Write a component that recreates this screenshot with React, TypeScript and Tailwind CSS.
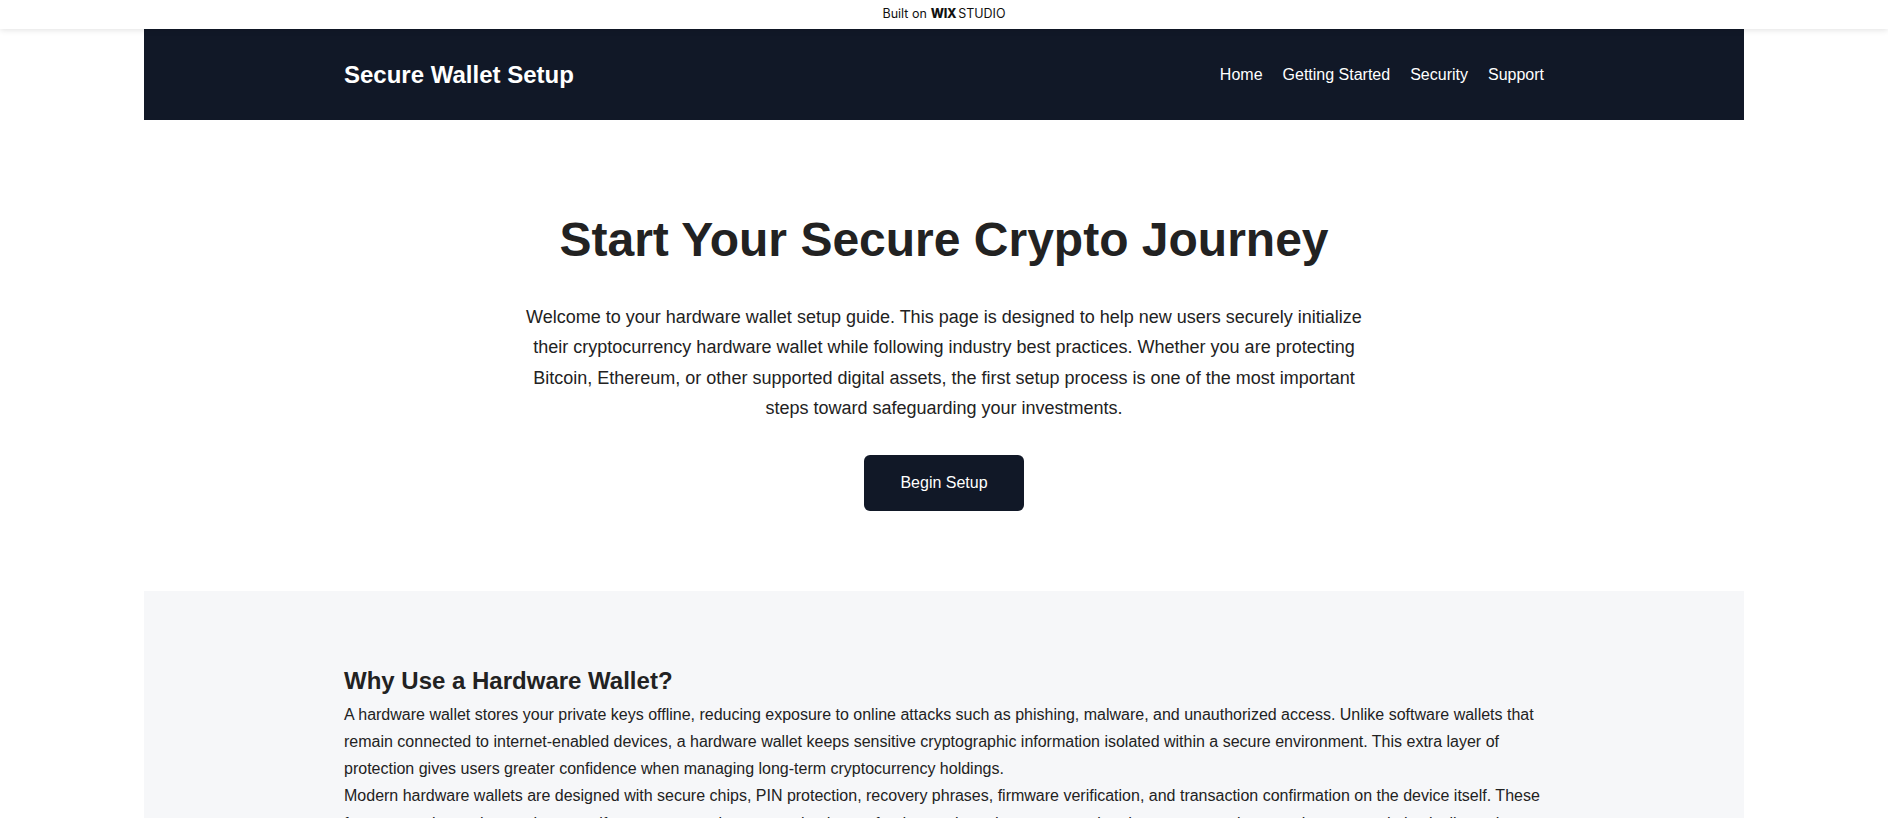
const navLinks = ["Home", "Getting Started", "Security", "Support"];

function BuiltOnBar() {
  return (
    <div className="relative z-10 flex h-[29px] items-center justify-center bg-white shadow-[0_1px_6px_rgba(0,0,0,0.12)]">
      <span className="flex items-center gap-[4px] text-[12.5px] text-[#111] font-['Inter',sans-serif]">
        Built on
        <span className="flex items-center">
          <span className="font-extrabold tracking-[-0.3px]">WIX</span>
          <span className="ml-[2px] font-normal">STUDIO</span>
        </span>
      </span>
    </div>
  );
}

export default function App() {
  return (
    <div className="min-h-screen bg-white font-['Liberation_Sans',Arial,sans-serif] text-[#222]">
      <BuiltOnBar />

      <div className="mx-auto w-[1600px]">
        <header className="bg-[#111827]">
          <div className="mx-auto flex h-[91px] w-[1200px] items-center justify-between">
            <h1 className="text-2xl font-bold text-white">Secure Wallet Setup</h1>
            <nav className="flex items-center gap-5">
              {navLinks.map((link) => (
                <a key={link} href="#" className="text-base text-white">
                  {link}
                </a>
              ))}
            </nav>
          </div>
        </header>

        <section className="flex flex-col items-center px-6 pt-[91px] pb-20 text-center">
          <h2 className="text-5xl font-bold leading-[1.2] text-[#222]">
            Start Your Secure Crypto Journey
          </h2>
          <p className="mt-[33px] max-w-[850px] text-lg leading-[1.7] text-[#222]">
            Welcome to your hardware wallet setup guide. This page is designed to help new users
            securely initialize their cryptocurrency hardware wallet while following industry best
            practices. Whether you are protecting Bitcoin, Ethereum, or other supported digital
            assets, the first setup process is one of the most important steps toward safeguarding
            your investments.
          </p>
          <button className="mt-[31px] rounded-md bg-[#111827] px-9 py-4 text-base leading-6 text-white">
            Begin Setup
          </button>
        </section>

        <section className="bg-[#f6f7f9] pt-[76px] pb-20">
          <div className="mx-auto w-[1200px]">
            <h3 className="mb-[5px] text-2xl font-bold leading-[1.2] text-[#222]">
              Why Use a Hardware Wallet?
            </h3>
            <p className="text-base leading-[1.7] text-[#222]">
              A hardware wallet stores your private keys offline, reducing exposure to online attacks
              such as phishing, malware, and unauthorized access. Unlike software wallets that remain
              connected to internet-enabled devices, a hardware wallet keeps sensitive cryptographic
              information isolated within a secure environment. This extra layer of protection gives
              users greater confidence when managing long-term cryptocurrency holdings.
            </p>
            <p className="text-base leading-[1.7] text-[#222]">
              Modern hardware wallets are designed with secure chips, PIN protection, recovery
              phrases, firmware verification, and transaction confirmation on the device itself. These
              features work together so that even if your computer is compromised, your funds remain
              under your control and every transaction must be approved physically on the device.
            </p>
          </div>
        </section>
      </div>
    </div>
  );
}
